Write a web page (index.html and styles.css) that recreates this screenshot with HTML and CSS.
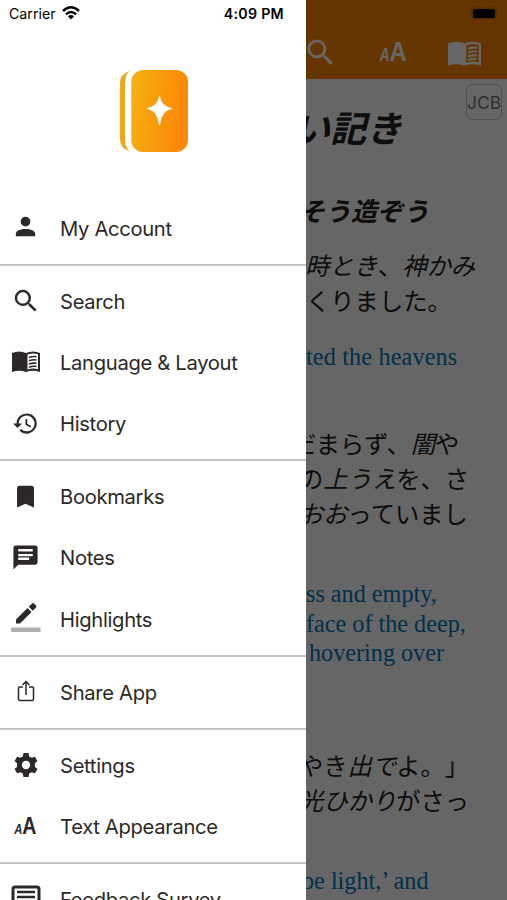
FILE: index.html
```html
<!DOCTYPE html>
<html lang="ja">
<head>
    <meta charset="UTF-8">
    <meta name="viewport" content="width=device-width, initial-scale=1.0">
    <title>Bible</title>
    <link rel="stylesheet" href="styles.css">
</head>
<body>
    <!-- shared shapes -->
    <svg class="defs">
        <symbol id="search" viewBox="0 0 24 24">
            <path d="M15.5 14h-.79l-.28-.27A6.47 6.47 0 0 0 16 9.5 6.5 6.5 0 1 0 9.5 16c1.61 0 3.09-.59 4.23-1.57l.27.28v.79l5 4.99L20.49 19l-4.99-5zm-6 0C7.01 14 5 11.99 5 9.5S7.01 5 9.5 5 14 7.01 14 9.5 11.99 14 9.5 14z"/>
        </symbol>
        <symbol id="book" viewBox="0 0 28 22">
            <path d="M0 2Q7-1 14 2Q21-1 28 2V21Q21 18.500 14 21Q7 18.500 0 21ZM15.500 3.500V18.500Q21 16.500 26 18.200V3.200Q21 1.500 15.500 3.500Z" fill-rule="evenodd"/>
            <path d="M17 6.500Q21 5 24.500 5.700M17 9.800Q21 8.300 24.500 9M17 13.100Q21 11.600 24.500 12.300M17 16.200Q21 14.800 24.500 15.400" fill="none" stroke="currentColor" stroke-width="1.600"/>
        </symbol>
    </svg>

    <div id="app">
        <nav id="drawer">
            <div class="status-bar">
                <span class="carrier">Carrier</span>
                <svg class="wifi" viewBox="0 0 18 14"><path d="M1 5Q9-2.400 17 5M4 8.300Q9 3.800 14 8.300" fill="none" stroke="#000" stroke-width="2.400"/><path d="M5.900 10.300Q9 7.500 12.100 10.300L9 13.500Z"/></svg>
                <span class="time">4:09 PM</span>
            </div>
            <div class="logo">
                <svg viewBox="0 0 70 84">
                    <defs>
                        <linearGradient id="cover" x1="0" y1="0" x2="1" y2="0.200">
                            <stop offset="0" stop-color="#f4b211"/>
                            <stop offset="1" stop-color="#fc8708"/>
                        </linearGradient>
                    </defs>
                    <rect x="12.300" y="1" width="56.700" height="82" rx="12" fill="url(#cover)"/>
                    <path d="M10.500 2Q1 5 1 14V70Q1 79 10.500 82.500Q6 78 6 70V14Q6 6 10.500 2Z" fill="#f2a71b"/>
                    <path d="M40.500 27.500Q42 37.200 52.500 39.500Q42 41.800 40.500 56Q39 41.800 28.500 39.500Q39 37.200 40.500 27.500Z" fill="#fff" stroke="#fff" stroke-linejoin="round"/>
                </svg>
            </div>

            <ul class="group">
                <li><svg class="icon account" viewBox="0 0 24 24"><circle cx="12" cy="8" r="4"/><path d="M4 20V18C4 15.300 8 14 12 14S20 15.300 20 18V20Z"/></svg><span class="label">My Account</span></li>
            </ul>
            <ul class="group">
                <li><svg class="icon search"><use href="#search"/></svg><span class="label">Search</span></li>
                <li><svg class="icon book"><use href="#book"/></svg><span class="label">Language &amp; Layout</span></li>
                <li><svg class="icon history" viewBox="0 0 24 24"><path d="M13 3a9 9 0 0 0-9 9H1l3.890 3.890.07.140L9 12H6a7 7 0 1 1 2.060 4.940l-1.420 1.420A9 9 0 1 0 13 3zm-1 5v5l4.280 2.540.72-1.210-3.500-2.080V8H12z"/></svg><span class="label">History</span></li>
            </ul>
            <ul class="group">
                <li><svg class="icon bookmark" viewBox="0 0 24 24"><path d="M17 3H7c-1.100 0-2 .9-2 2v16l7-3 7 3V5c0-1.100-.9-2-2-2z"/></svg><span class="label">Bookmarks</span></li>
                <li><svg class="icon notes" viewBox="0 0 24 24"><path d="M20 2H4a2 2 0 0 0-2 2v18l4-4h14a2 2 0 0 0 2-2V4a2 2 0 0 0-2-2zM6 5h12v2H6zm0 4h12v2H6zm9 5H6v-2h9z" fill-rule="evenodd"/></svg><span class="label">Notes</span></li>
                <li><svg class="icon pen" viewBox="0 0 30 32"><path d="M5 18.500V22.500H9L20.500 11L16.500 7ZM17.800 5.700L21.800 9.700L25 6.500Q26 5.500 25 4.500L23 2.500Q22 1.500 21 2.500Z"/><path d="M0 26.500H29.500V31H0Z" fill="#b0b0b0"/></svg><span class="label">Highlights</span></li>
            </ul>
            <ul class="group">
                <li><svg class="icon share" viewBox="0 0 18 22"><path d="M6 7H2.500Q1.500 7 1.500 8V19Q1.500 20.500 3 20.500H15Q16.500 20.500 16.500 19V8Q16.500 7 15.500 7H12M9 15V1.500M5.500 5L9 1.500L12.500 5" fill="none" stroke="currentColor" stroke-width="1.500"/></svg><span class="label">Share App</span></li>
            </ul>
            <ul class="group">
                <li><svg class="icon gear" viewBox="0 0 24 24"><path d="M9.500 0H14.500L15.200 3.400L17.600 4.800L20.900 3.700L23.400 8L20.900 10.300V13.700L23.400 16L20.900 20.300L17.600 19.200L15.200 20.600L14.500 24H9.500L8.800 20.600L6.400 19.200L3.100 20.300L.6 16L3.100 13.700V10.300L.6 8L3.100 3.700L6.400 4.800L8.800 3.400ZM12 7.800A4.200 4.200 0 1 0 12 16.200A4.200 4.200 0 1 0 12 7.800Z" fill-rule="evenodd"/></svg><span class="label">Settings</span></li>
                <li><span class="icon letters"><i>A</i><b>A</b></span><span class="label">Text Appearance</span></li>
            </ul>
            <ul class="group">
                <li><svg class="icon survey" viewBox="0 0 30 30"><path d="M4 2H26Q28 2 28 4V21Q28 23 26 23H9L2 28V4Q2 2 4 2Z" fill="none" stroke="currentColor" stroke-width="3"/><path d="M6 7H24M6 12H24M6 17H18" stroke="currentColor" stroke-width="2.600"/></svg><span class="label">Feedback Survey</span></li>
            </ul>
        </nav>

        <main id="reader">
            <header>
                <div class="battery"></div>
                <div class="tools">
                    <svg class="tool-search"><use href="#search"/></svg>
                    <span class="letters"><i>A</i><b>A</b></span>
                    <svg class="tool-book"><use href="#book"/></svg>
                </div>
            </header>
            <span class="version">JCB</span>
            <h1><em>い記き</em></h1>
            <h2><em>そう造ぞう</em></h2>
            <div class="verse">
                <p><em>時とき</em>、<em>神かみ</em></p>
                <p class="l2">くりました。</p>
            </div>
            <div class="english first">
                <p>ted the heavens</p>
            </div>
            <div class="verse second">
                <p class="l3">だまらず、<em>闇</em>や</p>
                <p class="full">の<em>上うえ</em>を、さ</p>
                <p class="full"><em>おお</em>っていまし</p>
            </div>
            <div class="english">
                <p>ss and empty,</p>
                <p>face of the deep,</p>
                <p class="hover">hovering over</p>
            </div>
            <div class="verse third">
                <p class="full">やき<em>出で</em>よ。」</p>
                <p class="full"><em>光ひかり</em>がさっ</p>
            </div>
            <div class="english last">
                <p class="light">be light,’ and</p>
            </div>
            <div class="shade"></div>
        </main>
    </div>
</body>
</html>
```

FILE: styles.css
```css
body {
    margin: 0;
    font-family: Inter, "Noto Sans CJK JP", sans-serif;
    color: #2b2827;
}

p, h1, h2, ul {
    margin: 0;
    padding: 0;
}

.defs {
    display: none;
}

svg {
    fill: currentColor;
}

#app {
    display: flex;
    width: 507px;
    height: 900px;
    overflow: hidden;
}

/* Drawer */
#drawer {
    width: 306px;
    flex-shrink: 0;
    background-color: #fff;
}

.status-bar {
    display: flex;
    align-items: center;
    height: 27px;
    padding: 0 22px 0 9px;
    color: #000;
    font-size: 14.2px;
}

.wifi {
    width: 18px;
    height: 14px;
    margin-left: 6px;
    margin-top: -1px;
}

.time {
    margin-left: auto;
    font-weight: 600;
    letter-spacing: 0.3px;
}

.logo {
    height: 165.6px;
    padding: 42px 0 0 119px;
    box-sizing: border-box;
}

.logo svg {
    display: block;
    width: 70px;
    height: 84px;
}

.group {
    list-style: none;
    padding: 5px 0;
    border-bottom: 2px solid #c6c6c6;
}

.group li {
    display: grid;
    grid-template-columns: 51px 1fr;
    align-items: center;
    height: 61.15px;
}

.icon {
    width: 24px;
    height: 24px;
    margin: 0 auto;
}

.label {
    padding-left: 9px;
    font-size: 20.2px;
    letter-spacing: -0.32px;
    white-space: nowrap;
}

.icon.account,
.icon.bookmark,
.icon.notes {
    width: 29px;
    height: 29px;
}

.icon.account {
    margin-top: -3px;
}

.icon.search {
    width: 30px;
    height: 30px;
}

.icon.book {
    width: 28px;
    height: 22px;
}

.icon.history {
    width: 27px;
    height: 27px;
}

.icon.pen {
    width: 30px;
    height: 32px;
    margin-top: -4px;
}

.icon.share {
    width: 18px;
    height: 22px;
    margin-top: -3px;
}

.icon.survey {
    width: 30px;
    height: 30px;
}

.letters {
    display: flex;
    align-items: baseline;
    justify-content: center;
    font-family: "Liberation Sans Narrow", "Liberation Sans", sans-serif;
    line-height: 24px;
}

.letters i {
    font-size: 15px;
    font-weight: bold;
    transform: scaleX(0.75);
    margin-right: -2px;
}

.letters b {
    font-size: 23px;
    transform: scaleX(0.85);
    margin-left: -1px;
}

/* Reader */
#reader {
    position: relative;
    width: 201px;
    height: 900px;
    overflow: hidden;
    background-color: #fff;
    color: #222;
}

#reader header {
    height: 79px;
    background-color: #ff8800;
    color: #fff;
}

.battery {
    width: 22px;
    height: 9px;
    margin-left: 167px;
    border-radius: 2px;
    background-color: #000;
    box-shadow: 0 0 0 2px #d87300;
    transform: translateY(9px);
}

.tools {
    display: flex;
    align-items: center;
    height: 86px;
}

.tool-search {
    width: 35px;
    height: 35px;
    margin-left: -3px;
}

.tools .letters {
    width: 30px;
    margin-left: 40px;
    margin-top: 2px;
}

.tools .letters i {
    font-size: 18px;
}

.tools .letters b {
    font-size: 28px;
}

.tool-book {
    width: 33px;
    height: 26px;
    margin-left: 40px;
    margin-top: 3px;
}

.version {
    position: absolute;
    top: 84px;
    right: 5px;
    width: 34px;
    height: 34px;
    border: 1px solid #ccc;
    border-radius: 6px;
    color: #777;
    font-size: 17.5px;
    line-height: 36px;
    text-align: center;
}

h1, h2, .verse {
    font-family: "Noto Sans CJK JP", sans-serif;
    white-space: nowrap;
    text-spacing-trim: space-all;
}

h1 {
    margin: 24px 0 0 -12px;
    font-size: 36px;
    line-height: 46px;
}

h2 {
    margin: 43px 0 0 -7px;
    font-size: 26px;
    line-height: 36px;
}

.verse {
    margin-top: 19px;
    margin-left: -1px;
    font-size: 24.3px;
    line-height: 35.2px;
}

.l2 {
    margin-left: 1px;
}

.l3 {
    margin-left: -13px;
}

.full {
    margin-left: -6px;
}

.english {
    margin-top: 49px;
    color: #0079bd;
    font-family: "Liberation Serif", serif;
    font-size: 24.2px;
    line-height: 29.3px;
    white-space: nowrap;
}

.english.first {
    margin-top: 25px;
    letter-spacing: 0.15px;
}

.english.last {
    margin-top: 48px;
}

.verse.second {
    margin-top: 53px;
}

.verse.third {
    margin-top: 80px;
}

.hover {
    margin-left: 3px;
}

.light {
    margin-left: -4px;
}

/* dims the page while the drawer is open */
.shade {
    position: absolute;
    inset: 0;
    background-color: rgba(0, 0, 0, 0.6);
}
```
